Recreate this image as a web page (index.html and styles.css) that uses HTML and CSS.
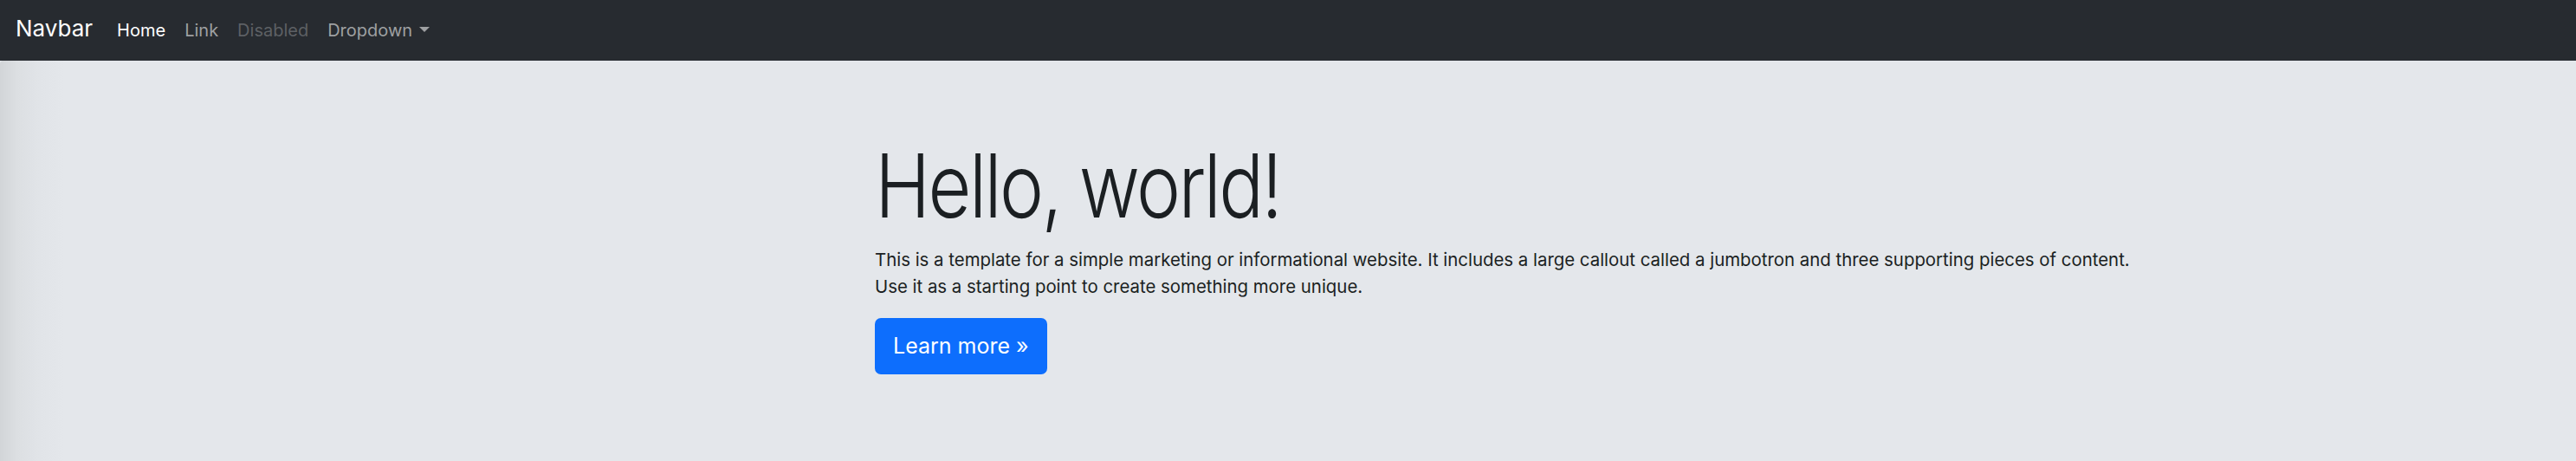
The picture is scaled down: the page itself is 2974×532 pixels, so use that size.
FILE: index.html
```html
<!DOCTYPE html>
<html lang="en">
<head>
<meta charset="utf-8">
<title>Jumbotron</title>
<link rel="stylesheet" href="styles.css">
</head>
<body>
<nav class="navbar">
  <a class="brand" href="#">Navbar</a>
  <ul class="nav">
    <li><a class="nav-link active" href="#">Home</a></li>
    <li><a class="nav-link" href="#">Link</a></li>
    <li><a class="nav-link disabled" href="#">Disabled</a></li>
    <li><a class="nav-link dropdown" href="#">Dropdown<span class="caret"></span></a></li>
  </ul>
</nav>
<main class="jumbotron">
  <div class="container">
    <h1 class="display">Hello, world!</h1>
    <p class="lead">This is a template for a simple marketing or informational website. It includes a large callout called a jumbotron and three supporting pieces of content. Use it as a starting point to create something more unique.</p>
    <a class="btn" href="#">Learn more &raquo;</a>
  </div>
</main>
</body>
</html>
```

FILE: styles.css
```css
html, body {
  margin: 0;
  padding: 0;
  height: 100%;
}
body {
  font-family: Inter, "Liberation Sans", sans-serif;
  background: #e4e7eb;
  color: #212529;
  display: flex;
  flex-direction: column;
}
a { text-decoration: none; }

.navbar {
  height: 70px;
  box-sizing: border-box;
  background: #272b30;
  display: flex;
  align-items: baseline;
  padding: 13px 18px 0;
  flex: none;
}
.brand {
  color: #fff;
  font-size: 26px;
  line-height: 39px;
  margin-right: 17px;
}
.nav {
  list-style: none;
  margin: 0;
  padding: 0;
  display: flex;
  align-items: baseline;
}
.nav-link {
  display: block;
  font-size: 20px;
  line-height: 30px;
  padding: 0 11px;
  color: #9ea0a2;
}
.nav-link.active { color: #fff; }
.nav-link.disabled { color: #5d6064; }
.caret {
  display: inline-block;
  margin-left: 8px;
  vertical-align: 5px;
  border-top: 6px solid currentColor;
  border-left: 6px solid transparent;
  border-right: 6px solid transparent;
}

.jumbotron {
  flex: 1;
  background: linear-gradient(to right, #d2d5d8 0, #dcdfe2 20px, #e1e4e8 45px, #e4e7eb 75px);
  border-top-left-radius: 4px;
}
.container {
  margin-left: 1010px;
  width: 1470px;
  padding-top: 93px;
}
.display {
  margin: 0;
  font-size: 102px;
  font-weight: 300;
  line-height: 1;
  letter-spacing: -0.03em;
  color: #1b1f22;
  transform: scaleX(0.845);
  transform-origin: 2px 0;
}
.lead {
  margin: 19px 0 21px;
  font-size: 20.4px;
  line-height: 31px;
  color: #1b1f22;
}
.btn {
  display: inline-block;
  background: #0d6efd;
  color: #fff;
  font-size: 25px;
  line-height: 39px;
  padding: 13px 21px;
  border-radius: 7px;
}
```
